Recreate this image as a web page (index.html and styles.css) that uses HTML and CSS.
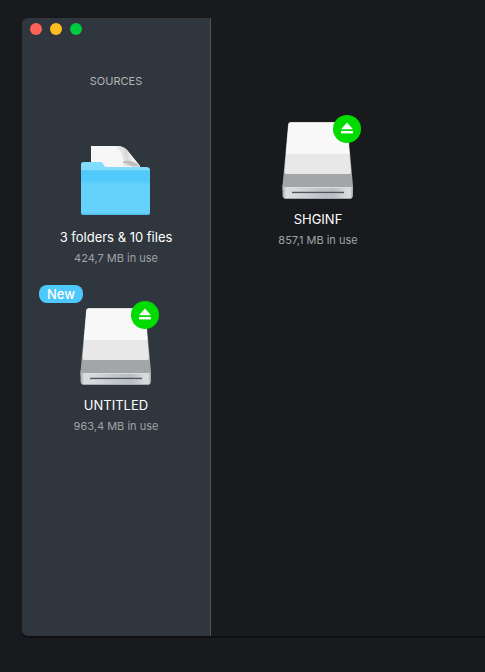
FILE: index.html
```html
<!DOCTYPE html>
<html lang="en">
<head>
<meta charset="utf-8">
<meta name="viewport" content="width=device-width, initial-scale=1">
<title>Sources</title>
<link rel="stylesheet" href="styles.css">
</head>
<body>
<svg class="defs" aria-hidden="true">
  <defs>
    <linearGradient id="edge" x1="0" x2="1" y1="0" y2="0">
      <stop offset="0" stop-color="#a3a8ab"/>
      <stop offset=".05" stop-color="#dadde0"/>
      <stop offset=".2" stop-color="#d5d9dc"/>
      <stop offset=".5" stop-color="#c0c5c9"/>
      <stop offset=".72" stop-color="#b9bec2"/>
      <stop offset=".9" stop-color="#d6d9dc"/>
      <stop offset=".96" stop-color="#dadddf"/>
      <stop offset="1" stop-color="#a3a8ab"/>
    </linearGradient>
    <linearGradient id="fold" x1="0" x2="1" y1=".3" y2=".1">
      <stop offset="0" stop-color="#f6f6f6"/>
      <stop offset=".45" stop-color="#d9d9d9"/>
      <stop offset=".6" stop-color="#eeeeee"/>
      <stop offset="1" stop-color="#e6e6e6"/>
    </linearGradient>
    <linearGradient id="front" x1="0" x2="0" y1="0" y2="1">
      <stop offset="0" stop-color="#63cdf5"/>
      <stop offset=".04" stop-color="#50cafa"/>
      <stop offset=".24" stop-color="#50cbfb"/>
      <stop offset=".32" stop-color="#65d2fb"/>
      <stop offset=".95" stop-color="#65d2fb"/>
      <stop offset="1" stop-color="#4bb8e2"/>
    </linearGradient>
  </defs>
  <symbol id="drive" viewBox="0 0 72 78">
    <path d="M0.500 64 L6 3 Q6 0 9 0 H62 Q65 0 65.500 3 L71 64 V68 H0.500Z" fill="#a2a6a7"/>
    <path d="M2.500 50 L6.500 3 Q6.500 0.500 9 0.500 H62 Q65 0.500 65 3 L69 50 Q69 52 67 52 H4.500 Q2.500 52 2.500 50Z" fill="#e8e8e8"/>
    <path d="M4 32 L6.500 3 Q6.500 0.500 9 0.500 H62 Q65 0.500 65 3 L67.500 32Z" fill="#f8f8f8"/>
    <path d="M0.500 62 Q1 65 3 65 H69 Q71 65 71 62 V73 Q71 77 67 77 H5 Q0.500 77 0.500 73Z" fill="url(#edge)"/>
    <path d="M3 65.500 H69" stroke="#d9dddf" fill="none"/>
    <path d="M4 76.500 H68" stroke="#a5a9ac" fill="none"/>
    <path d="M10 70.500 H62" stroke="#50565b" stroke-width="1.300" fill="none"/>
    <path d="M11 71.600 H61" stroke="#eceeef" stroke-opacity=".3" fill="none"/>
  </symbol>
  <symbol id="eject" viewBox="0 0 28 28">
    <path d="M14 7.500 L20 14.200 H8Z" fill="#fff"/>
    <rect x="8" y="16" width="12" height="2.400" fill="#fff"/>
  </symbol>
</svg>
<div class="window">
  <aside class="sidebar">
    <div class="titlebar">
      <button class="light close" aria-label="Close"></button>
      <button class="light minimize" aria-label="Minimize"></button>
      <button class="light zoom" aria-label="Zoom"></button>
    </div>
    <h2 class="heading">SOURCES</h2>
    <ul class="list">
      <li class="source">
        <div class="icon">
          <svg class="art" viewBox="0 0 72 78" aria-hidden="true">
            <path d="M11 30 V6 H37 Q43 6 47 10 L60 26 V30Z" fill="#f6f6f6"/>
            <path d="M34 6 H37 Q43 6 47 10 L60 26 H43 Q45 12 34 6Z" fill="url(#fold)"/>
            <path d="M43 22 Q46 20 50 21 Q56 22 60 26.500 H52 Q48 23 43 23Z" fill="#bcbebf"/>
            <path d="M1 40 V24 Q1 22 4 22 H20 Q22 22 23 23.500 L24 25.500 Q25 27 27 27 H66 Q70 27 70 30 V40Z" fill="#82dcfd"/>
            <path d="M1 30 H70 V73 Q70 75 68 75 H3 Q1 75 1 73Z" fill="url(#front)"/>
          </svg>
        </div>
        <span class="name">3 folders &amp; 10 files</span>
        <span class="usage">424,7 MB in use</span>
      </li>
      <li class="source">
        <span class="tag">New</span>
        <div class="icon">
          <svg class="art" aria-hidden="true"><use href="#drive"/></svg>
          <button class="eject" aria-label="Eject UNTITLED"><svg class="glyph" aria-hidden="true"><use href="#eject"/></svg></button>
        </div>
        <span class="name">UNTITLED</span>
        <span class="usage">963,4 MB in use</span>
      </li>
    </ul>
  </aside>
  <main class="content">
    <div class="source">
      <div class="icon">
        <svg class="art" aria-hidden="true"><use href="#drive"/></svg>
        <button class="eject" aria-label="Eject SHGINF"><svg class="glyph" aria-hidden="true"><use href="#eject"/></svg></button>
      </div>
      <span class="name">SHGINF</span>
      <span class="usage">857,1 MB in use</span>
    </div>
  </main>
</div>
</body>
</html>
```
FILE: styles.css
```css
* {
  box-sizing: border-box;
}

body {
  margin: 0;
  background: #191a1e;
  color: #fff;
  font-family: Inter, "Liberation Sans", sans-serif;
}

button {
  border: 0;
  padding: 0;
}

.defs {
  position: absolute;
  width: 0;
  height: 0;
}

.window {
  display: flex;
  min-height: calc(100vh - 54px);
  margin: 18px 0 36px 22px;
  border-radius: 6px 0 0 6px;
  box-shadow: 0 2px 0 #0f1013;
}

.sidebar {
  flex: 0 0 189px;
  border-right: 1px solid #505356;
  border-radius: 6px 0 0 6px;
  background: #2f363d;
}

.titlebar {
  display: flex;
  align-items: center;
  gap: 8px;
  height: 22px;
  padding: 0 8px;
}

.light {
  width: 12px;
  height: 12px;
  border-radius: 50%;
}

.close {
  background: #ff6259;
}

.minimize {
  background: #ffbd1f;
}

.zoom {
  background: #00ca40;
}

.heading {
  margin: 33px 0 0;
  color: #b2b5b8;
  font-size: 11px;
  font-weight: 400;
  line-height: 16px;
  text-align: center;
}

.list {
  display: flex;
  flex-direction: column;
  gap: 39px;
  margin: 51px 0 0;
  padding: 0;
  list-style: none;
}

.source {
  position: relative;
  display: flex;
  flex-direction: column;
  align-items: center;
}

.icon {
  position: relative;
  width: 72px;
  height: 78px;
  margin-bottom: 9px;
}

.art {
  display: block;
  width: 100%;
  height: 100%;
}

.eject {
  position: absolute;
  top: -7px;
  right: -7px;
  width: 28px;
  height: 28px;
  border-radius: 50%;
  background: #00dc00;
}

.glyph {
  display: block;
  width: 28px;
  height: 28px;
}

.name {
  font-size: 13px;
  line-height: 21px;
}

.usage {
  color: #9fa3a7;
  font-size: 11px;
  line-height: 21px;
}

.tag {
  position: absolute;
  top: -23px;
  left: 17px;
  width: 44px;
  border-radius: 8px;
  background: #4dc8fb;
  font-size: 13px;
  font-weight: 500;
  line-height: 18px;
  text-align: center;
}

.content {
  flex: 1;
  display: grid;
  grid-template-columns: repeat(auto-fill, 190px);
  align-content: start;
  padding: 104px 12px;
}
```
